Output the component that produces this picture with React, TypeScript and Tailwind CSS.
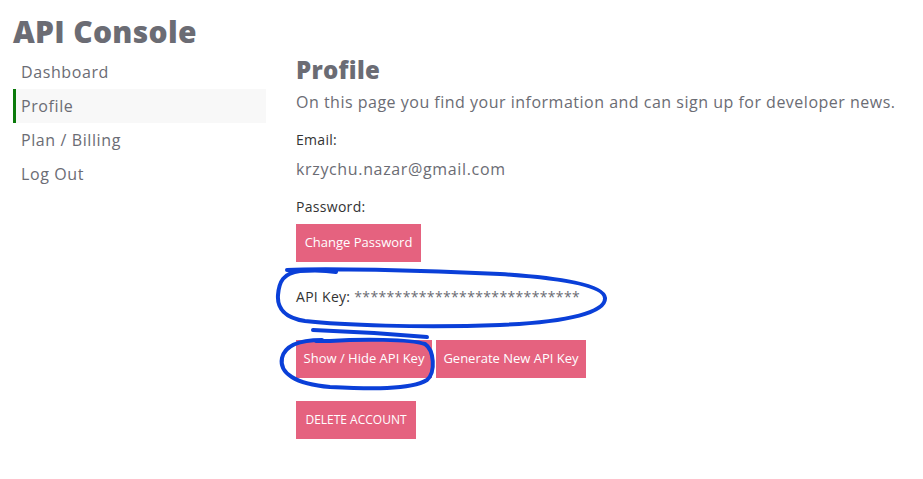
export default function App() {
  const nav = ["Dashboard", "Profile", "Plan / Billing", "Log Out"];

  return (
    <main className="relative min-h-screen bg-white px-[13px] pt-[14px] text-[#6b6c74] font-['Open_Sans',sans-serif]">
      <h1 className="text-[30px] leading-[36px] font-extrabold tracking-[0.3px]">API Console</h1>

      <div className="mt-[4px] flex gap-[30px]">
        {/* Sidebar */}
        <nav className="w-[253px] pt-[1px] tracking-[0.6px]">
          {nav.map((item) => (
            <div
              key={item}
              className={
                item === "Profile"
                  ? "h-[34px] flex items-center border-l-[3px] border-[#0b7a0b] bg-[#f8f8f8] pl-[5px] text-[16px]"
                  : "h-[34px] flex items-center pl-[8px] text-[16px]"
              }
            >
              {item}
            </div>
          ))}
        </nav>

        {/* Content */}
        <section className="flex-1">
          <h2 className="text-[24px] leading-[32px] font-extrabold tracking-[0.3px]">Profile</h2>
          <p className="mt-[4px] text-[16px] leading-[24px] tracking-[0.5px]">
            On this page you find your information and can sign up for developer news.
          </p>

          <p className="mt-[16px] text-[14px] leading-[20px] text-[#333] tracking-[0.3px]">Email:</p>
          <p className="mt-[7px] text-[16px] leading-[24px] tracking-[0.65px]">krzychu.nazar@gmail.com</p>

          <p className="mt-[16px] text-[14px] leading-[20px] text-[#333] tracking-[0.3px]">Password:</p>
          <button className="mt-[7px] h-[38px] w-[125px] bg-[#e5627f] text-[13px] text-white">
            Change Password
          </button>

          <p className="mt-[25px] text-[14px] leading-[20px] text-[#333] tracking-[0.3px]">
            API Key: <span className="text-[#6b6c74] tracking-[0.35px]">****************************</span>
          </p>

          <div className="mt-[33px] flex gap-[4px]">
            <button className="h-[38px] w-[136px] bg-[#e5627f] text-[13px] text-white">
              Show / Hide API Key
            </button>
            <button className="h-[38px] w-[150px] bg-[#e5627f] text-[13px] text-white">
              Generate New API Key
            </button>
          </div>

          <button className="mt-[23px] h-[38px] w-[120px] bg-[#e5627f] text-[12px] text-white">
            DELETE ACCOUNT
          </button>
        </section>
      </div>

      {/* hand-drawn annotation */}
      <svg className="pointer-events-none absolute left-0 top-0" width="923" height="479" fill="none">
        <path
          d="M287 270 C320 268 420 270 500 274 C560 278 604 285 605 298 C606 312 570 322 500 325 C420 328 340 325 305 321 C285 318 277 308 278 295 C279 282 283 273 300 271 C315 270 330 271 336 272"
          stroke="#0a3fd8"
          strokeWidth="4"
          strokeLinecap="round"
        />
        <path
          d="M313 330 C340 331 380 333 427 337"
          stroke="#0a3fd8"
          strokeWidth="4"
          strokeLinecap="round"
        />
        <path
          d="M322 340 C300 340 285 345 282 358 C279 373 295 384 330 387 C370 389 410 390 427 380 C436 372 434 350 425 344 C410 339 360 339 330 341 L316 341"
          stroke="#0a3fd8"
          strokeWidth="4"
          strokeLinecap="round"
        />
      </svg>
    </main>
  );
}
